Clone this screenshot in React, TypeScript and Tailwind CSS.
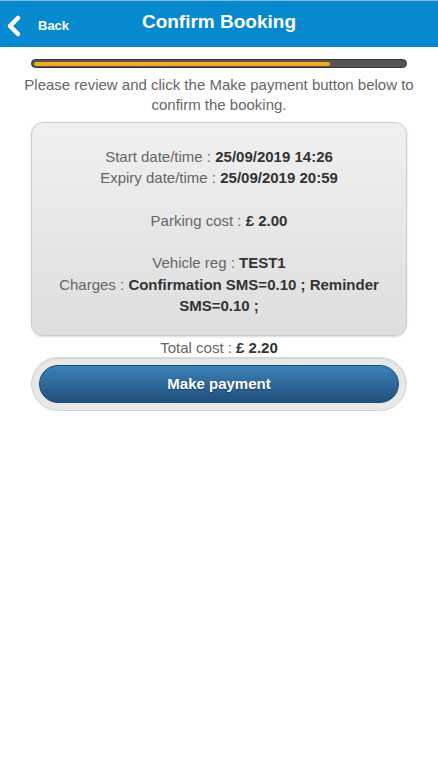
import React from 'react';

const Row: React.FC<{ label: string; value: string }> = ({ label, value }) => (
  <p>
    {label} : <span className="font-bold text-[#333]">{value}</span>
  </p>
);

const App: React.FC = () => {
  return (
    <div
      className="min-h-[779px] w-[438px] bg-white text-[15px] text-[#666]"
      style={{ fontFamily: '"Liberation Sans", Arial, sans-serif' }}
    >
      <header className="relative flex h-[47px] items-center justify-center border-t border-[#7fb8dc] bg-[#0789d0]">
        <button className="absolute left-[6px] top-[13px] flex items-center gap-[16px] text-white">
          <svg width="16" height="24" viewBox="0 0 16 24">
            <polyline
              points="12,4 4,12 12,20"
              fill="none"
              stroke="white"
              strokeWidth="4.5"
              strokeLinecap="round"
              strokeLinejoin="round"
            />
          </svg>
          <span className="text-[13px] font-bold">Back</span>
        </button>
        <h1 className="mb-[4px] text-[19px] font-bold text-white">Confirm Booking</h1>
      </header>

      <div className="px-[31px] pt-[12px]">
        <div className="h-[9px] rounded-full border border-[#333] bg-[#555] p-[1.5px]">
          <div className="h-full w-[80%] rounded-full bg-[#f5a623]" />
        </div>
      </div>

      <p className="mx-[20px] mt-[7px] text-center leading-[20px]">
        Please review and click the Make payment button below to confirm the booking.
      </p>

      <div className="mx-[31px] mt-[7px] rounded-[12px] border border-[#ccc] bg-gradient-to-b from-[#f0f0f0] to-[#dedede] px-[10px] pb-[19px] pt-[23px] text-center leading-[21.3px] shadow-[0_1px_2px_rgba(0,0,0,0.15)]">
        <Row label="Start date/time" value="25/09/2019 14:26" />
        <Row label="Expiry date/time" value="25/09/2019 20:59" />
        <br />
        <Row label="Parking cost" value="£ 2.00" />
        <br />
        <Row label="Vehicle reg" value="TEST1" />
        <Row label="Charges" value="Confirmation SMS=0.10 ; Reminder SMS=0.10 ;" />
      </div>

      <p className="mt-[3px] text-center leading-[18px]">
        Total cost : <span className="font-bold text-[#333]">£ 2.20</span>
      </p>

      <div className="mx-[31px] rounded-full border border-[#d5d5d5] bg-[#e8e8e8] p-[7px] shadow-[inset_0_1px_2px_rgba(0,0,0,0.08)]">
        <button className="flex h-[38px] w-full items-center justify-center rounded-full border border-[#1d4a70] bg-gradient-to-b from-[#3b82b9] to-[#21507c] text-[15px] font-bold text-white [text-shadow:0_1px_1px_rgba(0,0,0,0.4)]">
          Make payment
        </button>
      </div>
    </div>
  );
};

export default App;
